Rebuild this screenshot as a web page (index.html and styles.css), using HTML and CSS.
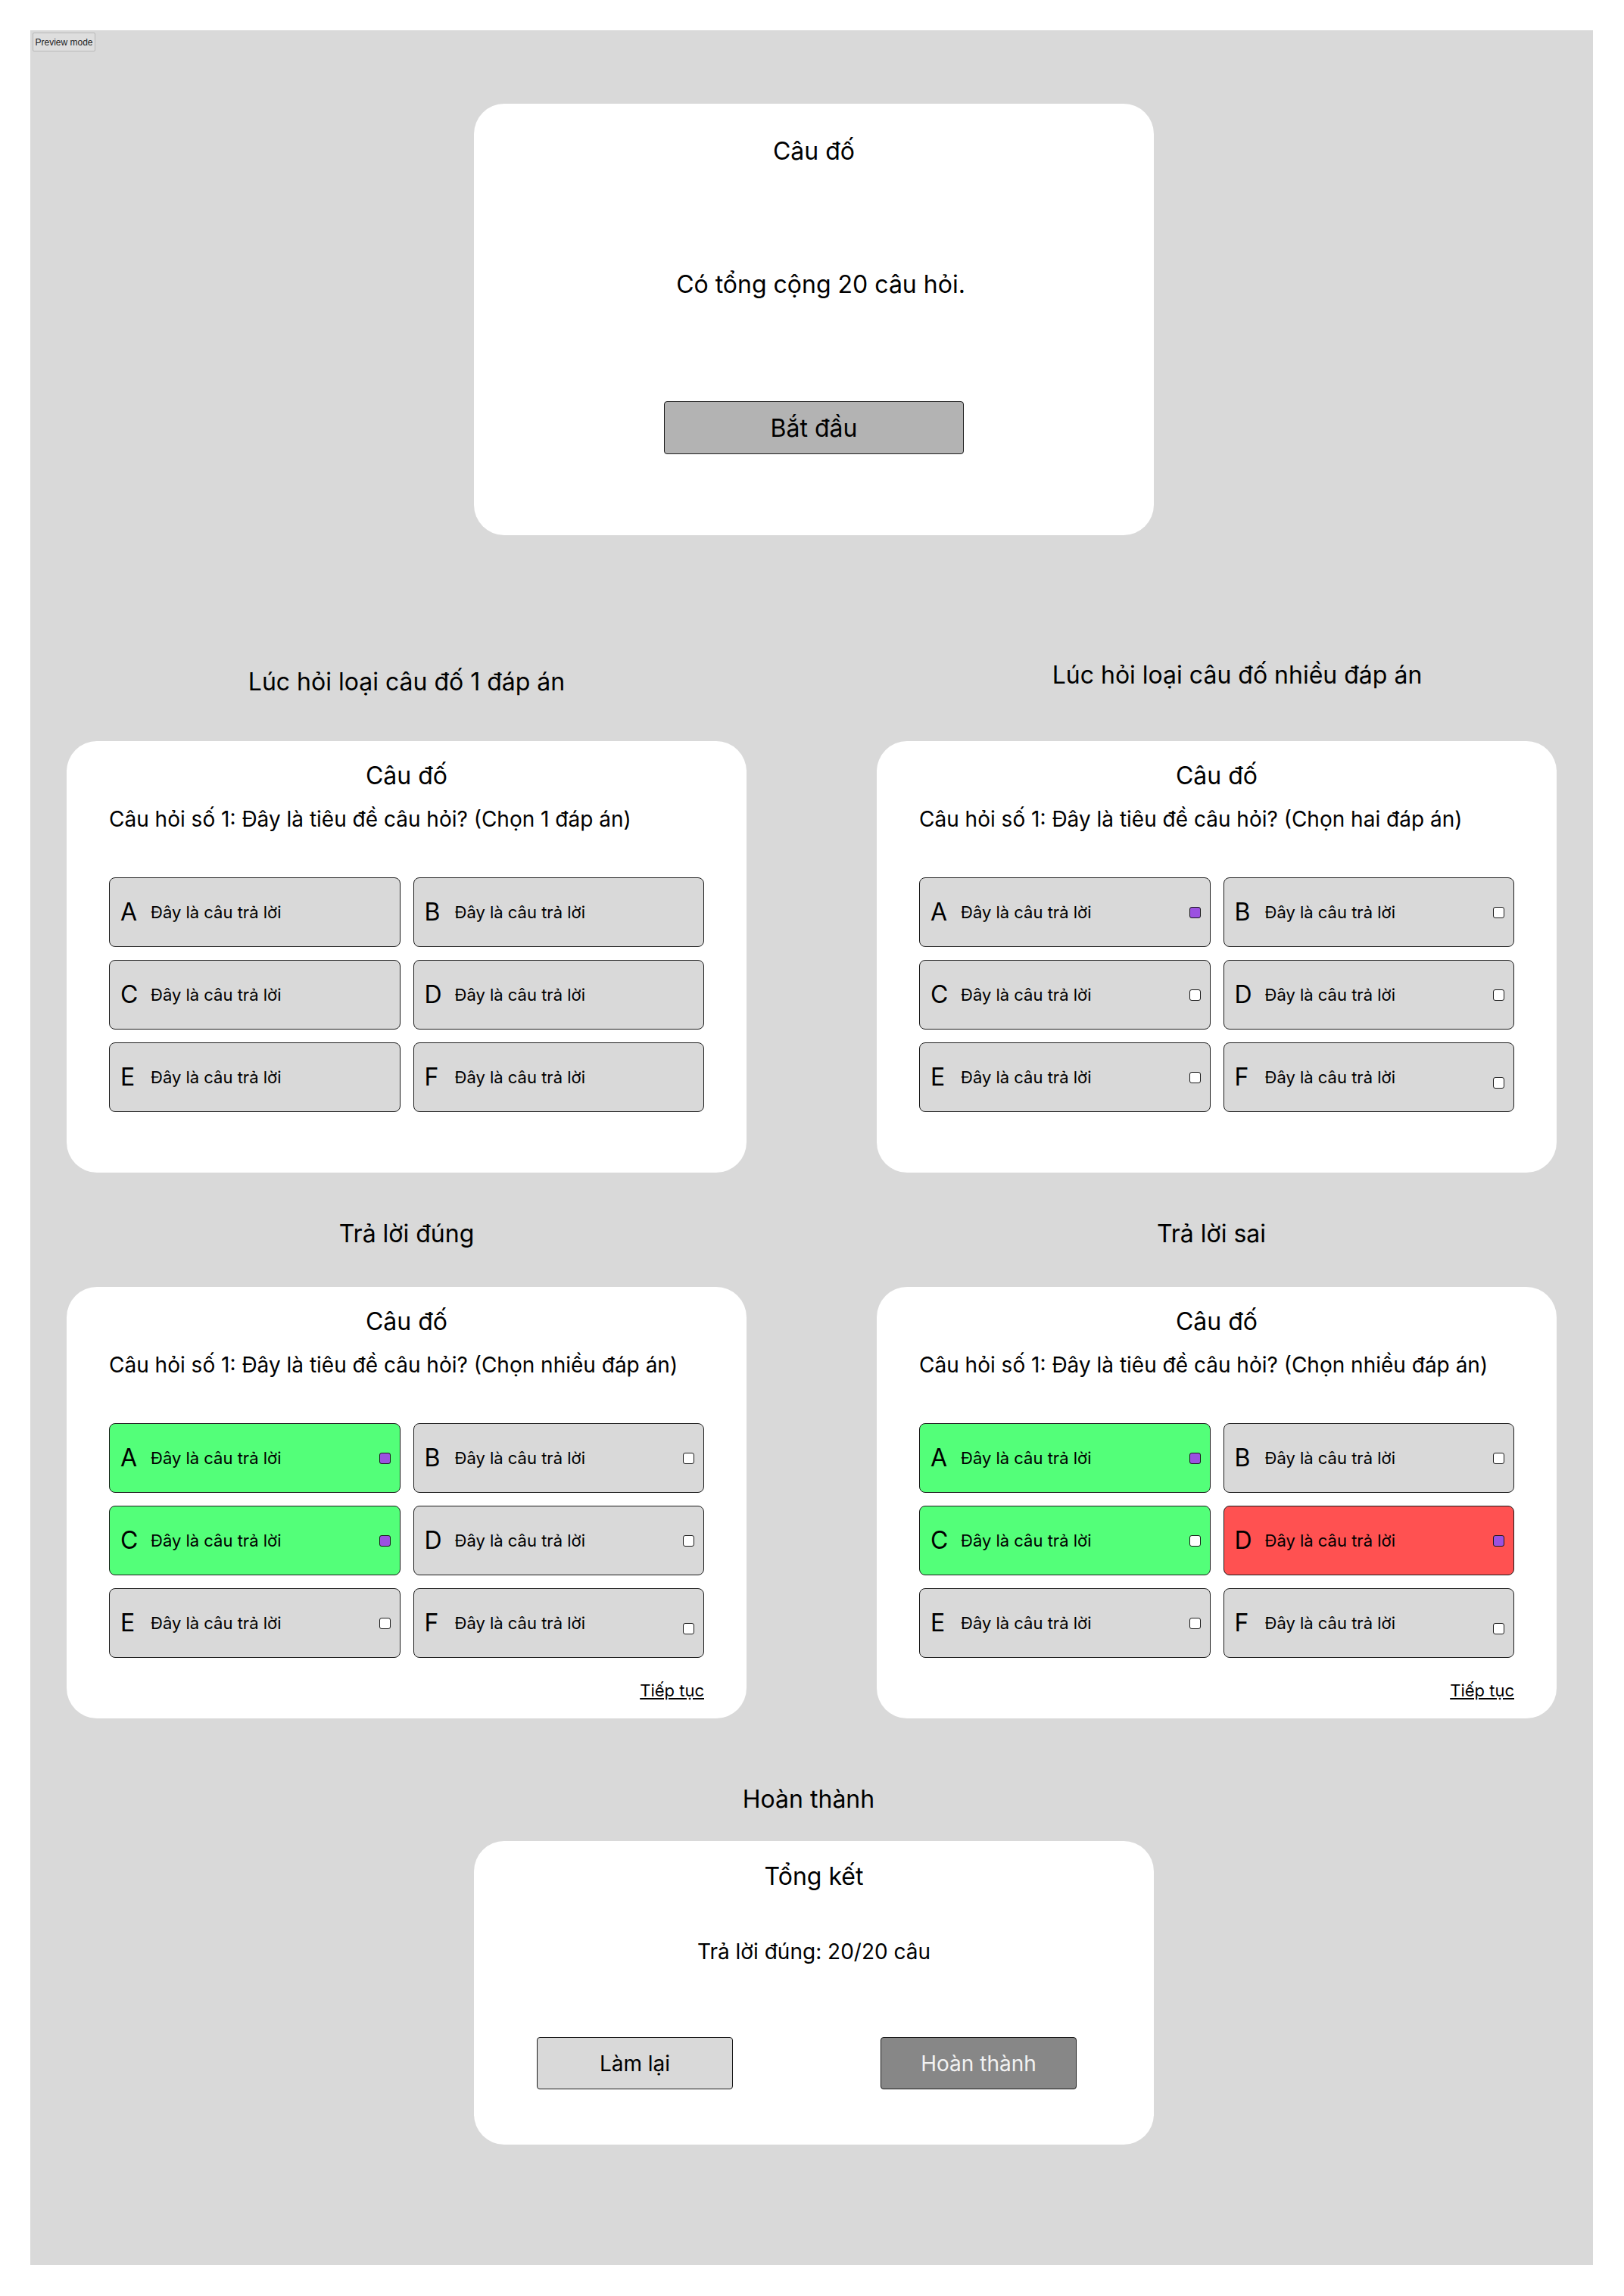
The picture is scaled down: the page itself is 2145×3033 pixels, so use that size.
FILE: index.html
```html
<!DOCTYPE html>
<html lang="vi">
<head>
<meta charset="utf-8">
<title>Câu đố</title>
<link rel="stylesheet" href="styles.css">
</head>
<body>
<div class="canvas">
  <button class="preview">Preview mode</button>

  <section class="card intro">
    <h2 class="card-title">Câu đố</h2>
    <p class="intro-text">Có tổng cộng 20 câu hỏi.</p>
    <button class="btn btn-start">Bắt đầu</button>
  </section>

  <div class="labels labels-1">
    <div class="label label-single">Lúc hỏi loại câu đố 1 đáp án</div>
    <div class="label label-multi">Lúc hỏi loại câu đố nhiều đáp án</div>
  </div>

  <div class="card-row row-1">
    <section class="card quiz">
      <h2 class="card-title">Câu đố</h2>
      <p class="question">Câu hỏi số 1: Đây là tiêu đề câu hỏi? (Chọn 1 đáp án)</p>
      <div class="answers">
        <div class="answer"><span class="letter">A</span><span class="answer-text">Đây là câu trả lời</span></div>
        <div class="answer"><span class="letter">B</span><span class="answer-text">Đây là câu trả lời</span></div>
        <div class="answer"><span class="letter">C</span><span class="answer-text">Đây là câu trả lời</span></div>
        <div class="answer"><span class="letter">D</span><span class="answer-text">Đây là câu trả lời</span></div>
        <div class="answer"><span class="letter">E</span><span class="answer-text">Đây là câu trả lời</span></div>
        <div class="answer"><span class="letter">F</span><span class="answer-text">Đây là câu trả lời</span></div>
      </div>
    </section>
    <section class="card quiz">
      <h2 class="card-title">Câu đố</h2>
      <p class="question">Câu hỏi số 1: Đây là tiêu đề câu hỏi? (Chọn hai đáp án)</p>
      <div class="answers">
        <div class="answer"><span class="letter">A</span><span class="answer-text">Đây là câu trả lời</span><span class="check on"></span></div>
        <div class="answer"><span class="letter">B</span><span class="answer-text">Đây là câu trả lời</span><span class="check"></span></div>
        <div class="answer"><span class="letter">C</span><span class="answer-text">Đây là câu trả lời</span><span class="check"></span></div>
        <div class="answer"><span class="letter">D</span><span class="answer-text">Đây là câu trả lời</span><span class="check"></span></div>
        <div class="answer"><span class="letter">E</span><span class="answer-text">Đây là câu trả lời</span><span class="check"></span></div>
        <div class="answer"><span class="letter">F</span><span class="answer-text">Đây là câu trả lời</span><span class="check low"></span></div>
      </div>
    </section>
  </div>

  <div class="labels labels-2">
    <div class="label">Trả lời đúng</div>
    <div class="label label-wrong">Trả lời sai</div>
  </div>

  <div class="card-row row-2">
    <section class="card quiz">
      <h2 class="card-title">Câu đố</h2>
      <p class="question">Câu hỏi số 1: Đây là tiêu đề câu hỏi? (Chọn nhiều đáp án)</p>
      <div class="answers">
        <div class="answer correct"><span class="letter">A</span><span class="answer-text">Đây là câu trả lời</span><span class="check on"></span></div>
        <div class="answer"><span class="letter">B</span><span class="answer-text">Đây là câu trả lời</span><span class="check"></span></div>
        <div class="answer correct"><span class="letter">C</span><span class="answer-text">Đây là câu trả lời</span><span class="check on"></span></div>
        <div class="answer"><span class="letter">D</span><span class="answer-text">Đây là câu trả lời</span><span class="check"></span></div>
        <div class="answer"><span class="letter">E</span><span class="answer-text">Đây là câu trả lời</span><span class="check"></span></div>
        <div class="answer"><span class="letter">F</span><span class="answer-text">Đây là câu trả lời</span><span class="check low"></span></div>
      </div>
      <a class="next">Tiếp tục</a>
    </section>
    <section class="card quiz">
      <h2 class="card-title">Câu đố</h2>
      <p class="question">Câu hỏi số 1: Đây là tiêu đề câu hỏi? (Chọn nhiều đáp án)</p>
      <div class="answers">
        <div class="answer correct"><span class="letter">A</span><span class="answer-text">Đây là câu trả lời</span><span class="check on"></span></div>
        <div class="answer"><span class="letter">B</span><span class="answer-text">Đây là câu trả lời</span><span class="check"></span></div>
        <div class="answer correct"><span class="letter">C</span><span class="answer-text">Đây là câu trả lời</span><span class="check"></span></div>
        <div class="answer wrong"><span class="letter">D</span><span class="answer-text">Đây là câu trả lời</span><span class="check on"></span></div>
        <div class="answer"><span class="letter">E</span><span class="answer-text">Đây là câu trả lời</span><span class="check"></span></div>
        <div class="answer"><span class="letter">F</span><span class="answer-text">Đây là câu trả lời</span><span class="check low"></span></div>
      </div>
      <a class="next">Tiếp tục</a>
    </section>
  </div>

  <div class="label label-done">Hoàn thành</div>

  <section class="card summary">
    <h2 class="card-title">Tổng kết</h2>
    <p class="summary-text">Trả lời đúng: 20/20 câu</p>
    <div class="summary-actions">
      <button class="btn btn-retry">Làm lại</button>
      <button class="btn btn-done">Hoàn thành</button>
    </div>
  </section>
</div>
</body>
</html>
```

FILE: styles.css
```css
* { box-sizing: border-box; }

html, body {
  margin: 0;
  padding: 0;
  background: #ffffff;
}

body {
  font-family: Inter, "Noto Sans", "Liberation Sans", sans-serif;
  color: #000;
  width: 2145px;
  padding: 40px 41px 41px 40px;
}

.canvas {
  position: relative;
  height: 2952px;
  background: #d9d9d9;
  display: flex;
  flex-direction: column;
  align-items: flex-start;
  padding: 97px 48px 0 48px;
}

.preview {
  position: absolute;
  left: 3px;
  top: 3px;
  width: 83px;
  height: 25px;
  padding: 0;
  background: #dedede;
  border: 1px solid #b8b8b8;
  border-radius: 2px;
  font-family: "Liberation Sans", Arial, sans-serif;
  font-size: 12px;
  color: #222;
}

.card {
  background: #fff;
  border-radius: 40px;
  width: 898px;
}

.card-title {
  margin: 0;
  font-size: 32px;
  line-height: 40px;
  font-weight: 400;
  text-align: center;
}

/* intro card */
.intro {
  height: 570px;
  margin-left: 538px;
  padding-top: 43px;
  display: flex;
  flex-direction: column;
  align-items: center;
}

.intro-text {
  margin: 136px 0 0 18px;
  font-size: 32px;
  line-height: 40px;
}

.btn {
  font-family: Inter, "Noto Sans", sans-serif;
  color: #000;
  border: 1px solid #1a1a1a;
  border-radius: 4px;
  padding: 0;
}

.btn-start {
  margin-top: 134px;
  width: 396px;
  height: 70px;
  background: #b3b3b3;
  font-size: 32px;
}

/* labels */
.labels {
  display: grid;
  grid-template-columns: 898px 898px;
  column-gap: 172px;
  align-items: start;
}

.label {
  font-size: 32px;
  line-height: 40px;
  text-align: center;
}

.labels-1 { margin-top: 172px; }
.label-single { margin-top: 2px; }
.label-multi { margin-top: -7px; padding-left: 54px; }

.labels-2 { margin-top: 61px; }
.label-wrong { padding-right: 14px; }

.card-row {
  display: flex;
  gap: 172px;
}

.row-1 { margin-top: 58px; }
.row-2 { margin-top: 50px; }

/* quiz card */
.quiz {
  height: 570px;
  padding: 26px 56px 0;
  display: flex;
  flex-direction: column;
}

.question {
  margin: 19px 0 0;
  font-size: 28px;
  line-height: 36px;
}

.answers {
  margin-top: 59px;
  display: grid;
  grid-template-columns: 1fr 1fr;
  grid-auto-rows: 92px;
  gap: 17px;
}

.answer {
  background: #d9d9d9;
  border: 1px solid #1a1a1a;
  border-radius: 8px;
  display: flex;
  align-items: center;
  padding: 0 12px 0 14px;
}

.answer.correct { background: #53ff79; }
.answer.wrong { background: #ff5151; }

.letter {
  width: 40px;
  flex: none;
  font-size: 32px;
  line-height: 40px;
}

.answer-text {
  font-size: 22px;
}

.check {
  margin-left: auto;
  width: 15px;
  height: 15px;
  flex: none;
  background: #fff;
  border: 1px solid #1a1a1a;
  border-radius: 3px;
}

.check.on { background: #9b51e0; }
.check.low { margin-top: 14px; }

.next {
  align-self: flex-end;
  margin-top: 29px;
  font-size: 22px;
  line-height: 28px;
  text-decoration: underline;
  color: #000;
}

/* summary */
.label-done {
  width: 898px;
  margin: 87px 0 0 538px;
  padding-right: 14px;
}

.summary {
  height: 401px;
  margin: 35px 0 0 538px;
  padding-top: 27px;
  display: flex;
  flex-direction: column;
  align-items: center;
}

.summary-text {
  margin: 61px 0 0;
  font-size: 28px;
  line-height: 36px;
}

.summary-actions {
  align-self: stretch;
  margin-top: 95px;
  display: flex;
  gap: 195px;
  padding-left: 83px;
}

.btn-retry, .btn-done {
  width: 259px;
  height: 69px;
  font-size: 28px;
}

.btn-retry { background: #d9d9d9; }
.btn-done { background: #878787; color: #f2f2f2; }
```
